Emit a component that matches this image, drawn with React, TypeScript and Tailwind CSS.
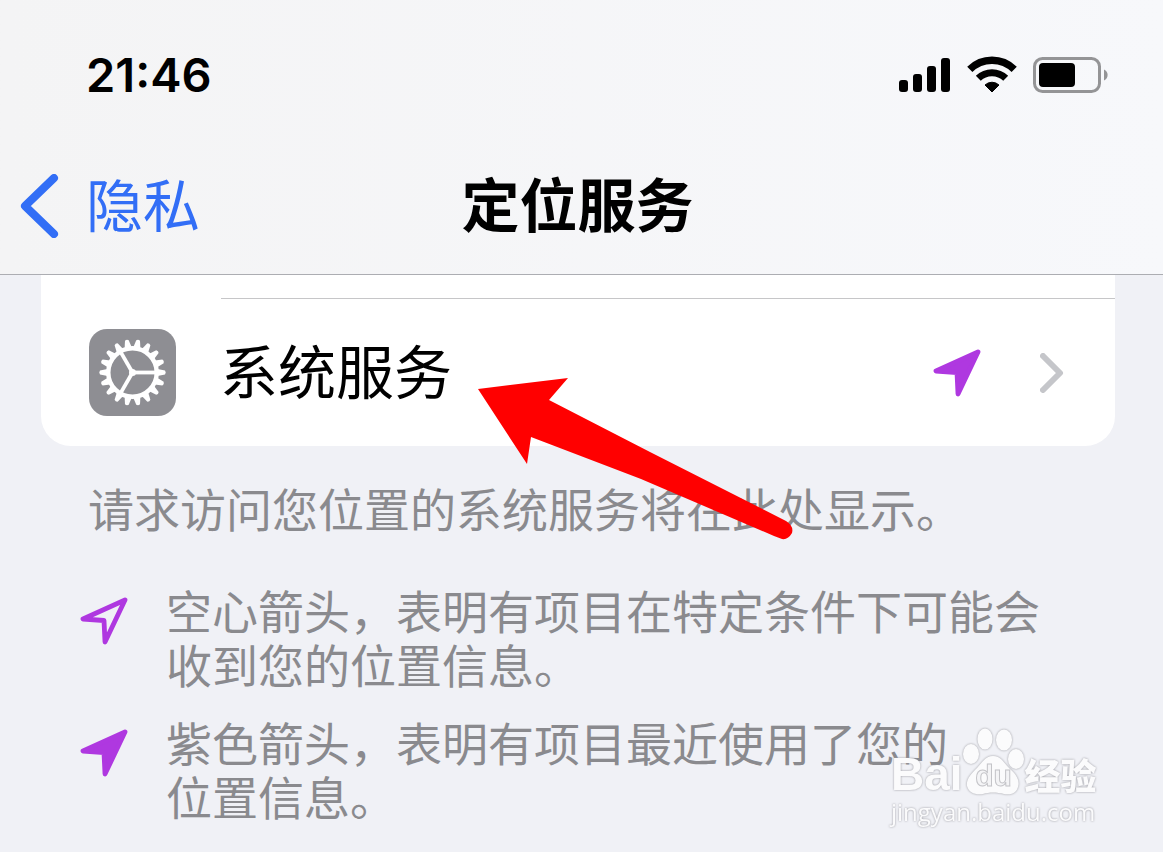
import React from "react";

interface LegendItem {
  id: string;
  filled: boolean;
  lines: string[];
}

const LEGEND: LegendItem[] = [
  { id: "hollow", filled: false, lines: ["空心箭头，表明有项目在特定条件下可能会", "收到您的位置信息。"] },
  { id: "purple", filled: true, lines: ["紫色箭头，表明有项目最近使用了您的", "位置信息。"] },
];

const TEETH = Array.from({ length: 18 }, (_, i) => i * 20);
const SPOKES = [0, 120, 240];

function SignalIcon() {
  return (
    <svg width="52" height="36" viewBox="0 0 52 36" aria-hidden="true">
      <rect x="0" y="23" width="9" height="12" rx="3" />
      <rect x="14" y="17" width="9" height="18" rx="3" />
      <rect x="28" y="9" width="9" height="26" rx="3" />
      <rect x="42" y="1" width="9" height="34" rx="3" />
    </svg>
  );
}

function WifiIcon() {
  return (
    <svg width="50" height="38" viewBox="0 0 50 38" aria-hidden="true">
      <path d="M2.800 13.400a31.500 31.500 0 0 1 44.400 0" fill="none" stroke="#000" strokeWidth="7.400" />
      <path d="M11.300 22.300a19.500 19.500 0 0 1 27.400 0" fill="none" stroke="#000" strokeWidth="7" />
      <path d="M25 36l-7-7a10.200 10.200 0 0 1 14 0z" stroke="#000" strokeWidth="1" strokeLinejoin="round" />
    </svg>
  );
}

function BatteryIcon() {
  return (
    <svg width="76" height="38" viewBox="0 0 76 38" aria-hidden="true">
      <rect x="1.5" y="2.5" width="65" height="33" rx="8" fill="none" stroke="#949496" strokeWidth="3" />
      <rect x="6" y="7" width="36" height="24" rx="4" />
      <path d="M71 13.500a6 6 0 0 1 0 11z" fill="#949496" />
    </svg>
  );
}

function GearIcon() {
  return (
    <svg className="w-[87px] h-[87px] shrink-0" viewBox="-43.5 -43.5 87 87" aria-hidden="true">
      <rect x="-43.5" y="-43.5" width="87" height="87" rx="18" fill="#8e8e93" />
      {TEETH.map((angle) => (
        <path key={angle} d="M25 -3.600L32.500 -1.900Q34 0 32.500 1.900L25 3.600z" fill="#fff" transform={`rotate(${angle})`} />
      ))}
      <circle r="24.200" fill="none" stroke="#fff" strokeWidth="4.400" />
      {SPOKES.map((angle) => (
        <path key={angle} d="M0 0H23" stroke="#fff" strokeWidth="3.800" transform={`rotate(${angle})`} />
      ))}
      <circle r="3.500" fill="#fff" />
    </svg>
  );
}

function LocationArrow({ filled }: { filled: boolean }) {
  return (
    <svg className="w-12 h-12 shrink-0" viewBox="0 0 48 48" aria-hidden="true">
      <path
        d="M45 3L3 22L24 23.500L25 45z"
        fill={filled ? "#af38e0" : "none"}
        stroke="#af38e0"
        strokeWidth="4.800"
        strokeLinejoin="round"
      />
    </svg>
  );
}

function PointerArrow() {
  return (
    <svg className="absolute left-[478px] top-[102px] pointer-events-none" width="318" height="164" viewBox="0 0 318 164" aria-hidden="true">
      <path
        d="M0 12L90 1L71 23L172 75L308 144Q316 149 314 156Q310 163 304 162L296 159L163 102L53 60L49 87z"
        fill="#f00"
      />
    </svg>
  );
}

function Watermark() {
  return (
    <div className="absolute right-[60px] bottom-6 w-[212px] text-[#fbfbfc] drop-shadow-[0_0_1px_#9a9aa0]">
      <div className="flex items-end h-[70px]">
        <span className="font-['Liberation_Sans',sans-serif] font-bold text-[46px] leading-[44px]">Bai</span>
        <span className="relative w-[62px] h-[70px] shrink-0">
          <svg width="62" height="70" viewBox="0 0 62 70" fill="currentColor" aria-hidden="true">
            <ellipse cx="8" cy="28" rx="8" ry="10" />
            <ellipse cx="22" cy="13" rx="7.500" ry="10.500" />
            <ellipse cx="41" cy="14" rx="8" ry="10.500" />
            <ellipse cx="53" cy="33" rx="8" ry="10" />
            <path d="M30 30C38 30 41 37 47 43C54 49 57 55 55 61C53 68 47 69 41 68C34 66 26 66 20 68C12 69 6 67 4 60C3 53 8 48 14 42C19 37 22 30 30 30z" />
          </svg>
          <span className="absolute inset-x-0 bottom-1 text-center font-['Liberation_Sans',sans-serif] font-bold text-[30px] leading-8 text-[#f4f4f6] [-webkit-text-stroke:1px_#c4c4c8]">
            du
          </span>
        </span>
        <span className="font-black text-[36px] leading-[44px] whitespace-nowrap">经验</span>
      </div>
      <div className="font-['Open_Sans',sans-serif] font-medium text-[24px] leading-8 whitespace-nowrap">jingyan.baidu.com</div>
    </div>
  );
}

export default function App() {
  return (
    <div className="relative min-h-screen flex flex-col overflow-hidden bg-[#f0f1f6] text-black font-['Noto_Sans_CJK_SC',sans-serif]">
      {/* Status bar + navigation */}
      <header className="bg-linear-to-r from-[#f4f4f5] to-[#f7f8fb] border-b border-[#acadb2]">
        <div className="h-[150px] flex items-center justify-between pl-[86px] pr-[54px]">
          <time className="font-['Inter',sans-serif] font-semibold text-[47px] leading-[54px]">21:46</time>
          <div className="flex items-center gap-4">
            <SignalIcon />
            <WifiIcon />
            <BatteryIcon />
          </div>
        </div>
        <nav className="h-[124px] grid grid-cols-[1fr_auto_1fr] items-center pl-5 pr-7 pb-5">
          <button type="button" className="flex items-center gap-[26px] text-[#326ef6] text-[57px] leading-[64px]">
            <svg className="mt-2" width="40" height="64" viewBox="0 0 40 64" fill="none" aria-hidden="true">
              <path d="M34 4L5 32L34 60" stroke="currentColor" strokeWidth="8" strokeLinecap="round" strokeLinejoin="round" />
            </svg>
            隐私
          </button>
          <h1 className="font-bold text-[58px] leading-[64px]">定位服务</h1>
        </nav>
      </header>

      <main className="relative">
        <section className="ml-[41px] mr-12 pt-[23px] bg-white rounded-b-[30px]">
          <button type="button" className="w-full text-left">
            <span className="block ml-[180px] h-px bg-[#c6c6c8]" />
            <span className="flex items-center h-[147px] pl-12 pr-[51px]">
              <GearIcon />
              <span className="flex-1 pl-11 pb-2 text-[58px] leading-[64px]">系统服务</span>
              <LocationArrow filled />
              <svg className="ml-[59px]" width="24" height="40" viewBox="0 0 24 40" fill="none" aria-hidden="true">
                <path d="M3 3L20 20L3 37" stroke="#c5c6ca" strokeWidth="6" strokeLinecap="round" strokeLinejoin="round" />
              </svg>
            </span>
          </button>
        </section>

        <div className="px-20 pt-[34px] text-[46px] leading-[54px] text-[#8a8a8e]">
          <p className="pl-2">请求访问您位置的系统服务将在此处显示。</p>
          <ul className="mt-12 flex flex-col gap-6">
            {LEGEND.map((item) => (
              <li key={item.id} className="flex items-start gap-[38px]">
                <span className="pt-[15px]">
                  <LocationArrow filled={item.filled} />
                </span>
                <p className="whitespace-nowrap">
                  {item.lines.map((line) => (
                    <span key={line} className="block">
                      {line}
                    </span>
                  ))}
                </p>
              </li>
            ))}
          </ul>
        </div>

        <PointerArrow />
      </main>

      <Watermark />
    </div>
  );
}
